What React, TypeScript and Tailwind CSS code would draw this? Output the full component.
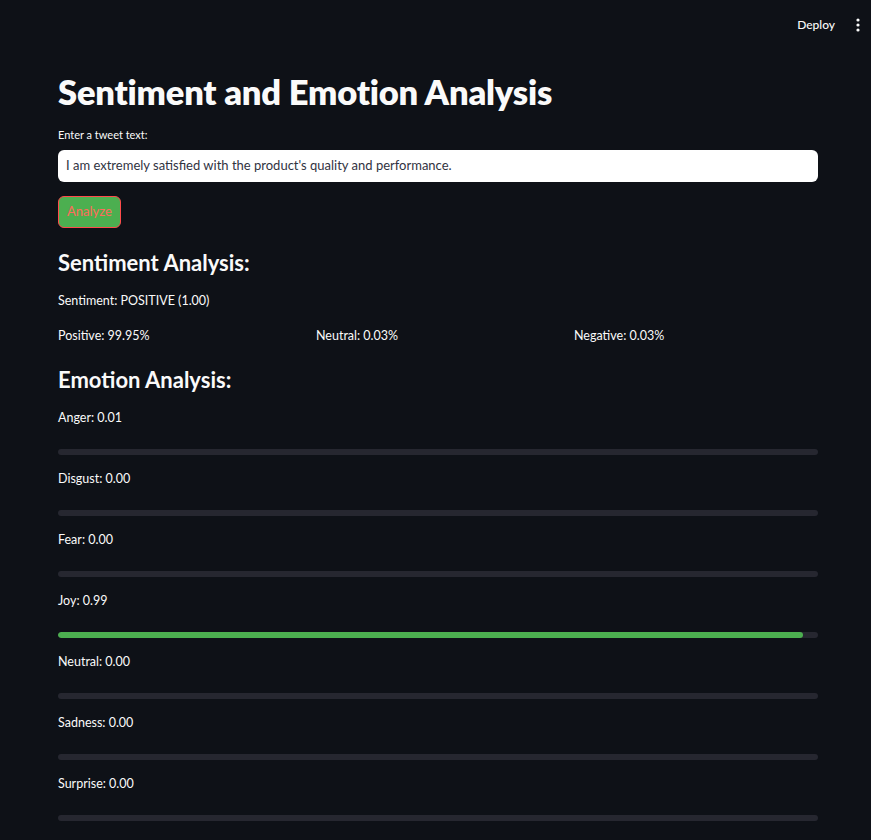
import React from 'react';

const emotions = [
  { name: 'Anger', score: 0.01, fill: 0 },
  { name: 'Disgust', score: 0.0, fill: 0 },
  { name: 'Fear', score: 0.0, fill: 0 },
  { name: 'Joy', score: 0.99, fill: 98 },
  { name: 'Neutral', score: 0.0, fill: 0 },
  { name: 'Sadness', score: 0.0, fill: 0 },
  { name: 'Surprise', score: 0.0, fill: 0 },
];

export default function App() {
  return (
    <div className="min-h-[840px] bg-[#0e1117] text-[#fafafa] font-['Lato','Liberation_Sans',sans-serif]">
      {/* Header */}
      <div className="h-[50px] flex items-center justify-end pr-[11px]">
        <span className="text-[12px] font-medium mr-[21px] text-[#fafafa]">Deploy</span>
        <svg width="4" height="14" viewBox="0 0 4 14">
          <circle cx="2" cy="2" r="1.6" fill="#fafafa" />
          <circle cx="2" cy="7" r="1.6" fill="#fafafa" />
          <circle cx="2" cy="12" r="1.6" fill="#fafafa" />
        </svg>
      </div>

      <div className="w-[760px] ml-[58px] flex flex-col">
        <h1 className="mt-[20px] text-[34.5px] leading-[43px] font-extrabold tracking-[-0.2px]">Sentiment and Emotion Analysis</h1>

        <label className="mt-[12px] text-[11px] leading-[20px]">Enter a tweet text:</label>
        <div className="mt-[5px] h-[32px] bg-white rounded-[6px] flex items-center px-[8px] text-[13px] text-[#31333f]">
          I am extremely satisfied with the product's quality and performance.
        </div>

        <div className="mt-[14px]">
          <button className="h-[32px] px-[8px] bg-[#4caf50] border border-[#ff4b4b] rounded-[6px] text-[13px] text-[#ff6b5b]">
            Analyze
          </button>
        </div>

        <h2 className="mt-[19px] text-[22px] leading-[32px] font-bold">Sentiment Analysis:</h2>
        <p className="mt-[12px] text-[12.5px] leading-[20px]">Sentiment: POSITIVE (1.00)</p>
        <div className="mt-[15px] grid grid-cols-3 gap-[14px] text-[12.5px] leading-[20px]">
          <span>Positive: 99.95%</span>
          <span>Neutral: 0.03%</span>
          <span>Negative: 0.03%</span>
        </div>

        <h2 className="mt-[18px] text-[22px] leading-[32px] font-bold">Emotion Analysis:</h2>
        <div className="mt-[12px] flex flex-col gap-[14px]">
          {emotions.map((e) => (
            <div key={e.name} className="flex flex-col">
              <span className="text-[12.5px] leading-[20px]">
                {e.name}: {e.score.toFixed(2)}
              </span>
              <div className="mt-[21px] h-[6px] rounded-full bg-[#262730] overflow-hidden">
                <div className="h-full rounded-full bg-[#4caf50]" style={{ width: `${e.fill}%` }} />
              </div>
            </div>
          ))}
        </div>
      </div>
    </div>
  );
}
